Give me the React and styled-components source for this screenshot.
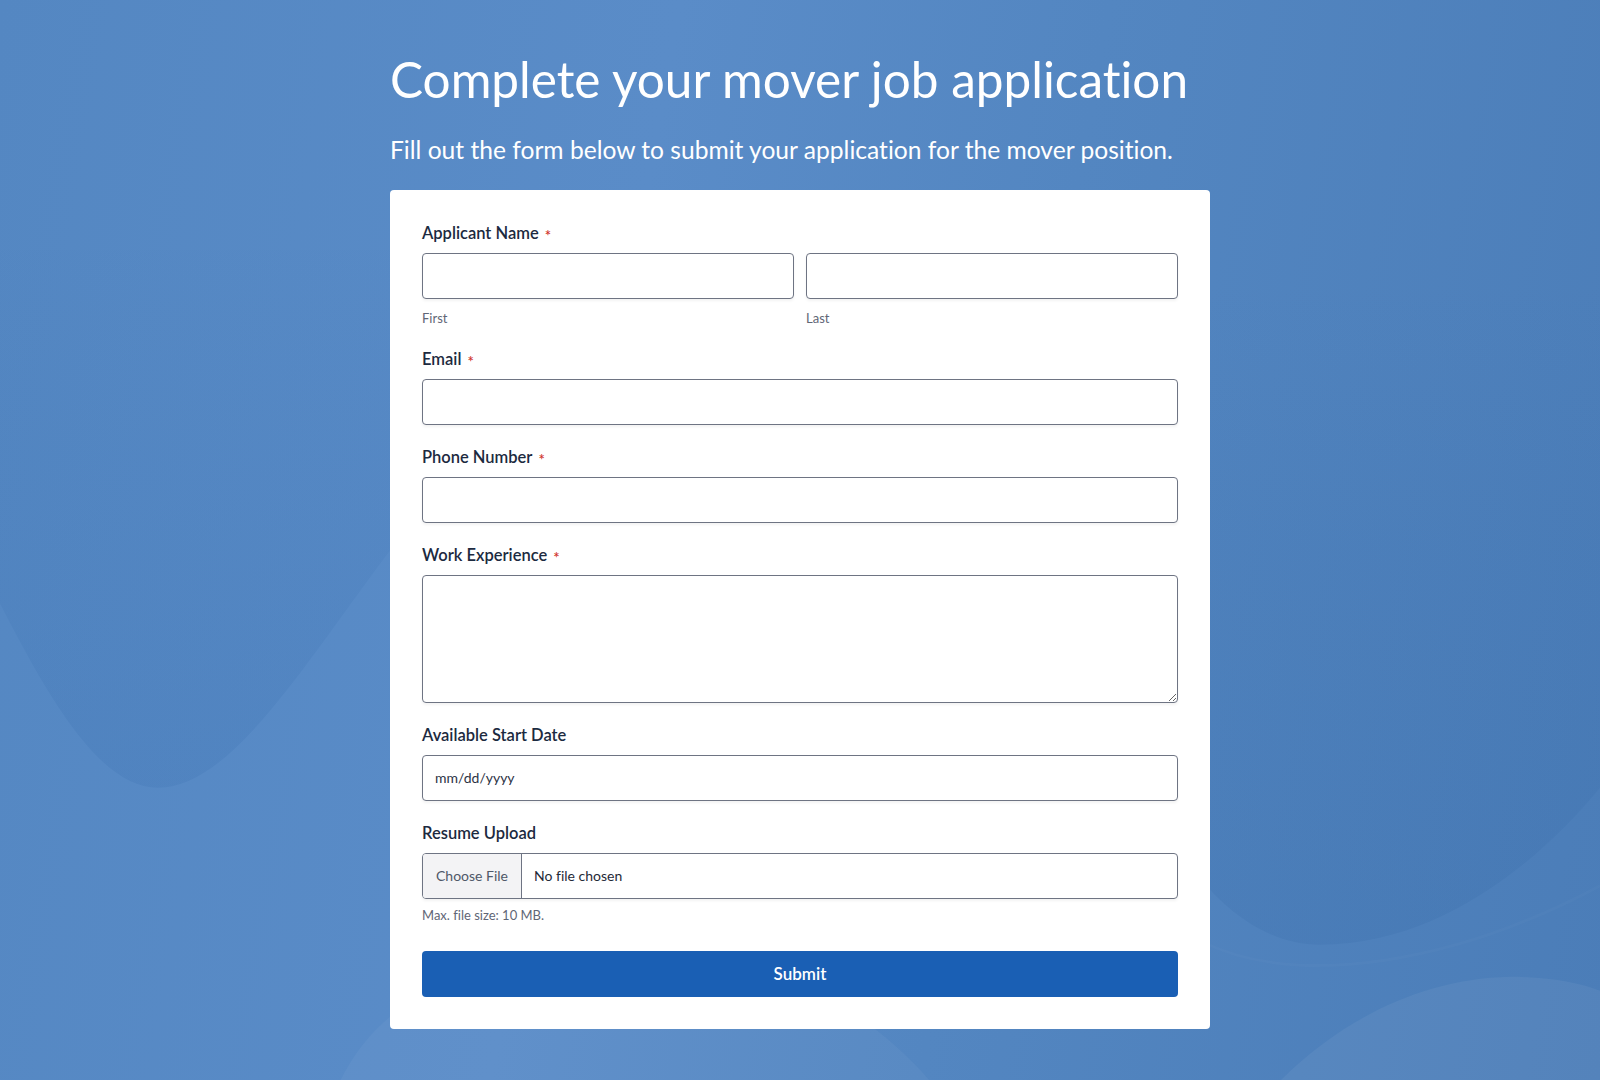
import React from 'react';
import styled, { createGlobalStyle } from 'styled-components';

const GlobalStyle = createGlobalStyle`
  * {
    box-sizing: border-box;
  }

  body {
    margin: 0;
    font-family: Lato, "Liberation Sans", sans-serif;
    font-variant-ligatures: none;
  }
`;

const Page = styled.div`
  position: relative;
  min-height: 100vh;
  overflow: hidden;
  background: linear-gradient(100deg, #5487c2 0%, #5a8cc8 38%, #5386c1 62%, #4b7db8 100%);
  display: flex;
  justify-content: center;
  padding: 50px 0 52px;
`;

const Backdrop = styled.svg`
  position: absolute;
  inset: 0;
  width: 100%;
  height: 100%;
  pointer-events: none;
`;

const Column = styled.main`
  position: relative;
  width: 820px;
`;

const Title = styled.h1`
  margin: 0;
  font-size: 49.5px;
  font-weight: 400;
  line-height: 1.2;
  color: #ffffff;
`;

const Subtitle = styled.p`
  margin: 26px 0 25px;
  font-size: 24.6px;
  line-height: 1.2;
  color: #ffffff;
`;

const Card = styled.form`
  background: #ffffff;
  border-radius: 4px;
  padding: 33px 32px 32px;
  display: flex;
  flex-direction: column;
  gap: 22px;
`;

const Field = styled.div`
  display: flex;
  flex-direction: column;
`;

const Label = styled.label`
  font-size: 16.5px;
  font-weight: 600;
  line-height: 20px;
  color: #1c2a40;
  margin-bottom: 10px;
`;

const Required = styled.span`
  position: relative;
  top: 2px;
  color: #d0342c;
  font-size: 15px;
  margin-left: 6px;
`;

const NameRow = styled.div`
  display: grid;
  grid-template-columns: 1fr 1fr;
  gap: 12px;
`;

const NamePart = styled.div`
  display: flex;
  flex-direction: column;
`;

const Input = styled.input`
  height: 46px;
  width: 100%;
  border: 1px solid #6e7483;
  border-radius: 4px;
  padding: 0 12px;
  font-family: inherit;
  font-size: 14px;
  color: #2c3345;
  background: #ffffff;
  box-shadow: 0 2px 3px rgba(0, 0, 0, 0.05);
  outline: none;

  &::placeholder {
    color: #2c3345;
    opacity: 1;
  }
`;

const TextArea = styled.textarea`
  height: 128px;
  width: 100%;
  border: 1px solid #6e7483;
  border-radius: 4px;
  padding: 10px 12px;
  font-family: inherit;
  font-size: 14px;
  box-shadow: 0 2px 3px rgba(0, 0, 0, 0.05);
  resize: vertical;
  outline: none;
`;

const Hint = styled.span`
  margin-top: ${(p) => p.$gap || 11}px;
  font-size: 13px;
  line-height: 17px;
  color: #5f6676;
`;

const FileBox = styled.div`
  height: 46px;
  display: flex;
  align-items: stretch;
  border: 1px solid #6e7483;
  border-radius: 4px;
  overflow: hidden;
  box-shadow: 0 2px 3px rgba(0, 0, 0, 0.05);
`;

const FileButton = styled.button`
  width: 99px;
  border: none;
  border-right: 1px solid #6e7483;
  background: #f3f3f5;
  font-family: inherit;
  font-size: 14px;
  color: #4f5868;
  padding: 0;
`;

const FileName = styled.span`
  display: flex;
  align-items: center;
  padding-left: 12px;
  font-size: 14px;
  color: #1f2937;
`;

const SubmitButton = styled.button`
  margin-top: 5px;
  height: 46px;
  border: none;
  border-radius: 4px;
  background: #1a5fb4;
  color: #ffffff;
  font-family: inherit;
  font-size: 17px;
  font-weight: 600;
`;

const Background = () => (
  <Backdrop viewBox="0 0 1600 1080" preserveAspectRatio="none">
    <defs>
      <linearGradient id="dip" x1="0" y1="0" x2="0" y2="1">
        <stop offset="0" stopColor="#2f66a8" stopOpacity="0" />
        <stop offset="0.45" stopColor="#2f66a8" stopOpacity="0.08" />
        <stop offset="1" stopColor="#2f66a8" stopOpacity="0.16" />
      </linearGradient>
      <linearGradient id="orb" x1="0" y1="0" x2="0" y2="1">
        <stop offset="0" stopColor="#2a5f9e" stopOpacity="0" />
        <stop offset="0.4" stopColor="#2a5f9e" stopOpacity="0.08" />
        <stop offset="1" stopColor="#2a5f9e" stopOpacity="0.14" />
      </linearGradient>
    </defs>
    <path
      d="M0,250 L0,603 C50,700 100,787 158,787 C230,787 300,670 390,550 C460,455 540,330 640,200 L640,250 Z"
      fill="url(#dip)"
    />
    <path
      d="M340,1080 C380,1000 460,955 620,950 C760,948 860,1000 930,1080 Z"
      fill="#ffffff"
      fillOpacity="0.04"
    />
    <path
      d="M1050,280 C1060,700 1180,944 1320,944 C1440,944 1540,860 1600,787 L1600,280 Z"
      fill="url(#orb)"
    />
    <path
      d="M1200,940 C1300,990 1460,960 1600,885"
      fill="none"
      stroke="#ffffff"
      strokeOpacity="0.02"
      strokeWidth="3"
    />
    <path
      d="M1280,1080 C1340,1020 1420,978 1510,976 C1550,976 1580,982 1600,990 L1600,1080 Z"
      fill="#ffffff"
      fillOpacity="0.05"
    />
  </Backdrop>
);

const App = () => (
  <>
    <GlobalStyle />
    <Page>
      <Background />
      <Column>
        <Title>Complete your mover job application</Title>
        <Subtitle>Fill out the form below to submit your application for the mover position.</Subtitle>
        <Card onSubmit={(e) => e.preventDefault()}>
          <Field>
            <Label>
              Applicant Name<Required>*</Required>
            </Label>
            <NameRow>
              <NamePart>
                <Input type="text" />
                <Hint>First</Hint>
              </NamePart>
              <NamePart>
                <Input type="text" />
                <Hint>Last</Hint>
              </NamePart>
            </NameRow>
          </Field>
          <Field>
            <Label>
              Email<Required>*</Required>
            </Label>
            <Input type="email" />
          </Field>
          <Field>
            <Label>
              Phone Number<Required>*</Required>
            </Label>
            <Input type="tel" />
          </Field>
          <Field>
            <Label>
              Work Experience<Required>*</Required>
            </Label>
            <TextArea />
          </Field>
          <Field>
            <Label>Available Start Date</Label>
            <Input type="text" placeholder="mm/dd/yyyy" />
          </Field>
          <Field>
            <Label>Resume Upload</Label>
            <FileBox>
              <FileButton type="button">Choose File</FileButton>
              <FileName>No file chosen</FileName>
            </FileBox>
            <Hint $gap={8}>Max. file size: 10 MB.</Hint>
          </Field>
          <SubmitButton type="submit">Submit</SubmitButton>
        </Card>
      </Column>
    </Page>
  </>
);

export default App;
